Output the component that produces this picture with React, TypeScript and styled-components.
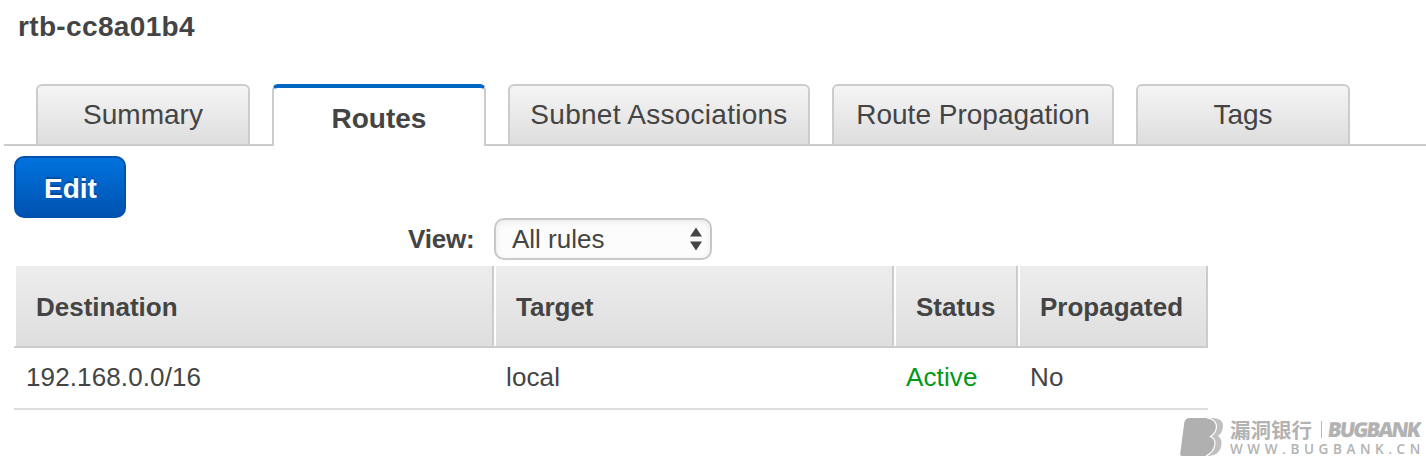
import React from "react";
import styled, { createGlobalStyle, css } from "styled-components";

const GlobalStyle = createGlobalStyle`
  * { box-sizing: border-box; }
  body {
    margin: 0;
    background: #fff;
    color: #444;
    font-family: "Liberation Sans", Arial, Helvetica, sans-serif;
    font-size: 26px;
    overflow: hidden;
  }
`;

const Page = styled.main`
  width: 1426px;
  height: 460px;
  overflow: hidden;
`;

const Title = styled.h1`
  margin: 0;
  height: 84px;
  padding: 11px 0 0 18px;
  font-size: 28px;
  line-height: 32px;
  font-weight: 700;
  letter-spacing: 0.35px;
`;

const TabBar = styled.nav`
  display: flex;
  gap: 22px;
  height: 62px;
  margin-left: 4px;
  padding-left: 32px;
  background: linear-gradient(#ccc, #ccc) bottom / 100% 2px no-repeat;
`;

const Tab = styled.a<{ $width: number; $active?: boolean; $spacing?: number }>`
  width: ${(p) => p.$width}px;
  height: 62px;
  text-align: center;
  font-size: 28px;
  line-height: 32px;
  letter-spacing: ${(p) => p.$spacing ?? 0}px;
  padding-top: 13px;
  border: 2px solid #ccc;
  border-radius: 6px 6px 0 0;
  background: linear-gradient(#f5f5f5, #ddd);
  white-space: nowrap;
  ${(p) =>
    p.$active &&
    css`
      padding-top: 15px;
      font-weight: 700;
      background: #fff;
      border-top: 4px solid #0066c2;
      border-bottom: 0;
    `}
`;

const EditButton = styled.button`
  display: block;
  width: 112px;
  height: 62px;
  margin: 10px 0 0 14px;
  padding: 3px 0 0 1px;
  border: 2px solid #0050ae;
  border-radius: 10px;
  background: linear-gradient(#0073dd, #0052b1);
  color: #fff;
  font: 700 28px/32px "Liberation Sans", Arial, sans-serif;
  text-shadow: 0 -2px 1px rgba(0, 40, 100, 0.4);
`;

const FilterRow = styled.div`
  display: flex;
  align-items: center;
  height: 42px;
  padding-left: 408px;
`;

const FilterLabel = styled.label`
  width: 86px;
  font-weight: 700;
  line-height: 30px;
  letter-spacing: -0.2px;
  white-space: nowrap;
`;

const Select = styled.div`
  display: flex;
  align-items: center;
  justify-content: space-between;
  width: 218px;
  height: 42px;
  padding: 0 8px 0 16px;
  line-height: 30px;
  border: 2px solid #c8c8c8;
  border-radius: 10px;
  background: #fcfcfc;
  box-shadow: inset 0 2px 6px rgba(0, 0, 0, 0.08);
`;

const Table = styled.table`
  width: 1194px;
  margin: 6px 0 0 14px;
  table-layout: fixed;
  border-collapse: separate;
  border-spacing: 0;
`;

const Column = styled.col<{ $width: number }>`
  width: ${(p) => p.$width}px;
`;

const HeaderCell = styled.th`
  height: 82px;
  padding: 2px 0 0 22px;
  text-align: left;
  line-height: 30px;
  border-bottom: 2px solid #ccc;
  background: linear-gradient(#fff, #fff) left / 2px 100% no-repeat,
    linear-gradient(#ccc, #ccc) right / 2px 100% no-repeat,
    linear-gradient(#ededed, #dedede);
`;

const Cell = styled.td<{ $active?: boolean }>`
  height: 62px;
  padding: 0 0 2px 12px;
  line-height: 30px;
  letter-spacing: 0.12px;
  border-bottom: 2px solid #ddd;
  color: ${(p) => (p.$active ? "#009917" : "#444")};
`;

const Watermark = styled.footer`
  display: flex;
  margin: 8px 0 0 1180px;
  color: #b2b2b2;
`;

const Brand = styled.div`
  padding-left: 6px;
`;

const BrandNames = styled.div`
  display: flex;
  align-items: center;
  height: 22px;
`;

const ChineseName = styled.span`
  width: 91px;
  font: 700 20.5px/20px "Noto Sans CJK SC", sans-serif;
  white-space: nowrap;
`;

const Divider = styled.span`
  width: 1px;
  height: 17px;
  margin-right: 6px;
  background: #b8b8b8;
`;

const LatinName = styled.span`
  display: inline-block;
  width: 92px;
  font: 800 20.5px/20px "Open Sans", sans-serif;
  letter-spacing: -1.9px;
  white-space: nowrap;
  transform: skewX(-7deg);
`;

const Address = styled.div`
  padding-top: 2px;
  font: 600 13.5px/14px "Open Sans", sans-serif;
  letter-spacing: 4.6px;
  white-space: nowrap;
`;

const tabs = [
  { label: "Summary", width: 214 },
  { label: "Routes", width: 214, active: true },
  { label: "Subnet Associations", width: 302, spacing: 0.27 },
  { label: "Route Propagation", width: 282 },
  { label: "Tags", width: 214 },
];

const columns = [
  { label: "Destination", width: 480 },
  { label: "Target", width: 400 },
  { label: "Status", width: 124 },
  { label: "Propagated", width: 190 },
];

export default function App() {
  return (
    <Page>
      <GlobalStyle />
      <Title>rtb-cc8a01b4</Title>
      <TabBar>
        {tabs.map((t) => (
          <Tab
            key={t.label}
            $width={t.width}
            $active={t.active}
            $spacing={t.spacing}
          >
            {t.label}
          </Tab>
        ))}
      </TabBar>
      <EditButton>Edit</EditButton>
      <FilterRow>
        <FilterLabel>View:</FilterLabel>
        <Select>
          All rules
          <svg width="12" height="24" viewBox="0 0 12 24" fill="#444">
            <path d="M6 0.5L12 9.5H0ZM0 14.5H12L6 23.5Z" />
          </svg>
        </Select>
      </FilterRow>
      <Table>
        <colgroup>
          {columns.map((c) => (
            <Column key={c.label} $width={c.width} />
          ))}
        </colgroup>
        <thead>
          <tr>
            {columns.map((c) => (
              <HeaderCell key={c.label}>{c.label}</HeaderCell>
            ))}
          </tr>
        </thead>
        <tbody>
          <tr>
            <Cell>192.168.0.0/16</Cell>
            <Cell>local</Cell>
            <Cell $active>Active</Cell>
            <Cell>No</Cell>
          </tr>
        </tbody>
      </Table>
      <Watermark>
        <svg width="44" height="38" viewBox="0 0 44 38">
          <path
            d="M28 0H33Q43 0.500 43 8Q43 14.500 38 18Q41.500 20 41.500 25Q41 37 29 38H24Z"
            fill="#c0c0c0"
          />
          <path
            d="M10 0H26Q36 0.500 36.500 9Q36 15 30.500 18.500Q35.500 21 35 26Q34 34 26 38H2Q0 38 0.200 36L4.200 5Q5 0 10 0Z"
            fill="#b0b0b0"
          />
          <path
            d="M27 0Q36 1 36.500 9Q36 15 30.500 18.500Q35.500 21 35 26Q34 34 26 38"
            fill="none"
            stroke="#fff"
            strokeWidth="1.200"
          />
        </svg>
        <Brand>
          <BrandNames>
            <ChineseName>漏洞银行</ChineseName>
            <Divider />
            <LatinName>BUGBANK</LatinName>
          </BrandNames>
          <Address>WWW.BUGBANK.CN</Address>
        </Brand>
      </Watermark>
    </Page>
  );
}
